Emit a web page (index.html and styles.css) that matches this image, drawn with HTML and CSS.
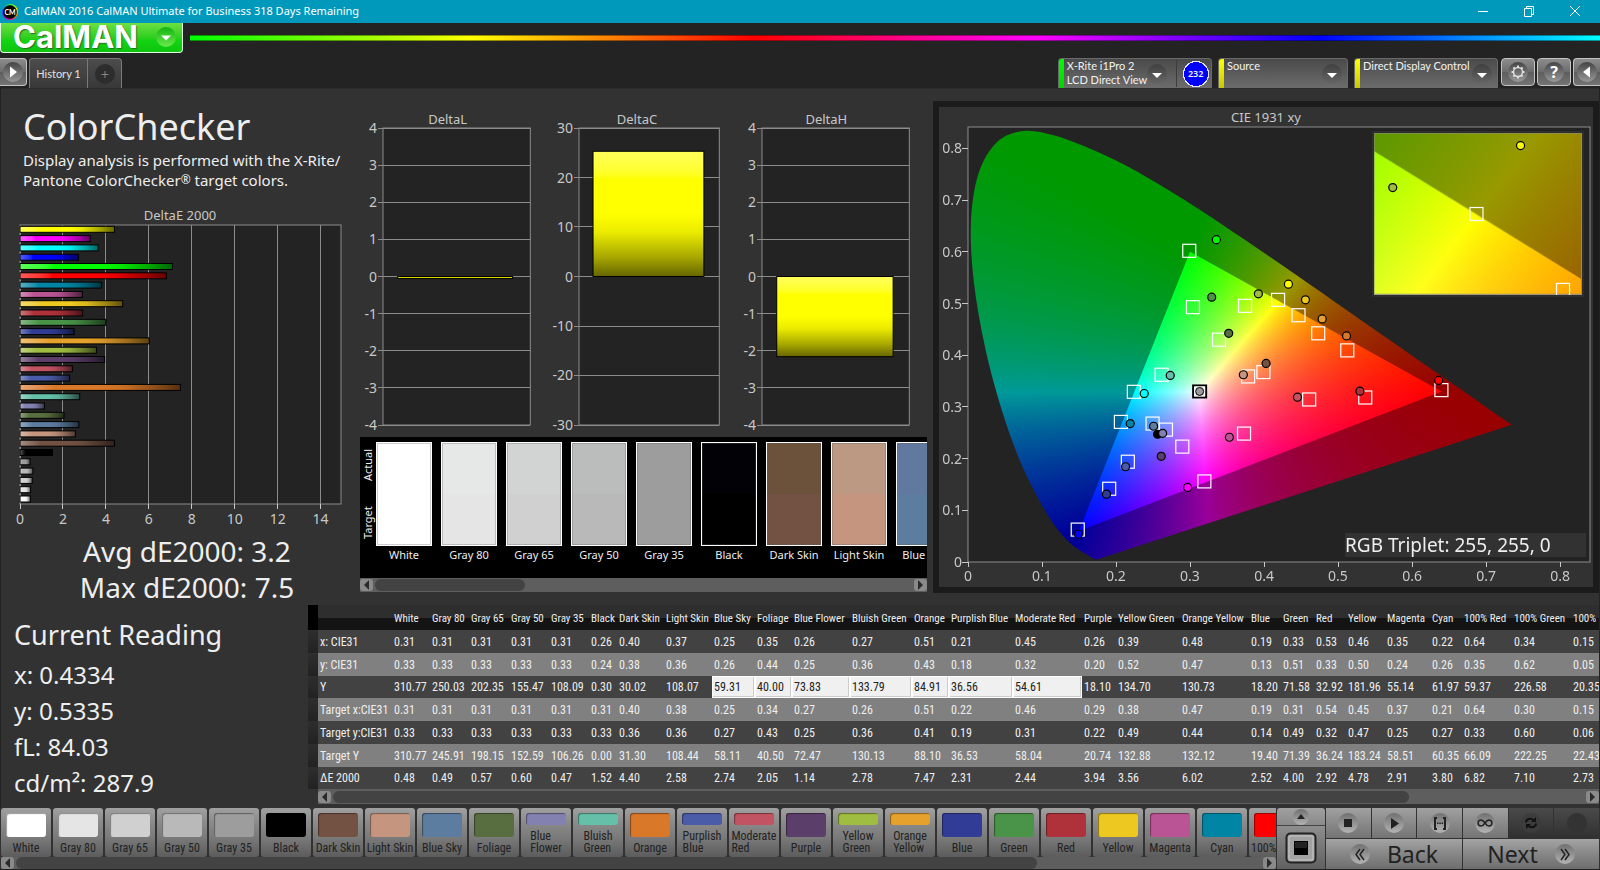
FILE: index.html
```html
<!DOCTYPE html>
<html lang="en">
<head>
<meta charset="utf-8">
<title>CalMAN 2016</title>
<link rel="stylesheet" href="styles.css">
</head>
<body>
<header class="titlebar">
  <span class="app-icon">CM</span>
  <h1 class="window-title">CalMAN 2016 CalMAN Ultimate for Business 318 Days Remaining</h1>
  <div class="window-controls">
    <button aria-label="Minimize"><svg width="12" height="12" viewBox="0 0 12 12"><path d="M1 6.500h10"/></svg></button>
    <button aria-label="Restore"><svg width="12" height="12" viewBox="0 0 12 12"><path d="M1.500 3.500h7v8h-7zM3.500 3.500v-2h7v8h-2"/></svg></button>
    <button aria-label="Close"><svg width="12" height="12" viewBox="0 0 12 12"><path d="M1 1l10 10M11 1L1 11"/></svg></button>
  </div>
</header>

<div class="brand">
  <button class="logo" aria-label="CalMAN menu"><span>CalMAN</span><svg width="20" height="20" viewBox="0 0 20 20"><circle cx="10" cy="10" r="10" fill="url(#logoDisc)"/><path d="M5 8.500h10l-5 5z" fill="#fff"/><defs><linearGradient id="logoDisc" x1="0" y1="0" x2="0" y2="1"><stop offset="0" stop-color="#12b312"/><stop offset="1" stop-color="#6bea4c"/></linearGradient></defs></svg></button>
  <div class="rainbow"></div>
</div>

<nav class="toolbar">
  <button class="square square-left" aria-label="Expand"><svg class="disc" viewBox="0 0 20 20"><path d="M7 4.500l7 5.500-7 5.500z"/></svg></button>
  <div class="tabs">
    <button class="tab">History 1</button>
    <button class="tab tab-add" aria-label="Add tab"><svg viewBox="0 0 20 20"><circle cx="10" cy="10" r="10"/><path d="M10 7v7M6.500 10.500h7"/></svg></button>
  </div>
  <div class="devices">
    <div class="device device-meter">
      <span class="stripe stripe-green"></span>
      <span class="device-name">X-Rite i1Pro 2<br>LCD Direct View</span>
      <button class="drop" aria-label="Meter options"><svg viewBox="0 0 20 20"><path d="M5 9h10l-5 5z"/></svg></button>
      <span class="count">232</span>
    </div>
    <div class="device device-source">
      <span class="stripe"></span>
      <span class="device-name">Source</span>
      <button class="drop" aria-label="Source options"><svg viewBox="0 0 20 20"><path d="M5 9h10l-5 5z"/></svg></button>
    </div>
    <div class="device device-display">
      <span class="stripe"></span>
      <span class="device-name">Direct Display Control</span>
      <button class="drop" aria-label="Display options"><svg viewBox="0 0 20 20"><path d="M5 9h10l-5 5z"/></svg></button>
    </div>
    <button class="square" aria-label="Settings"><svg class="disc" viewBox="0 0 20 20"><circle cx="10" cy="10" r="4.500" fill="none" stroke="#ddd" stroke-width="1.500"/><path d="M10 3.500v2M10 14.500v2M3.500 10h2M14.500 10h2M5.400 5.400l1.400 1.400M13.200 13.200l1.400 1.400M5.400 14.600l1.400-1.400M13.200 6.800l1.400-1.400" stroke="#ddd" stroke-width="2"/></svg></button>
    <button class="square square-help" aria-label="Help"><span class="disc">?</span></button>
    <button class="square square-right" aria-label="Collapse"><svg class="disc" viewBox="0 0 20 20"><path d="M13 4.500L6 10l7 5.500z"/></svg></button>
  </div>
</nav>

<main class="workspace">
  <section class="overview">
    <div class="summary">
      <h2 class="heading">ColorChecker</h2>
      <p class="lead">Display analysis is performed with the X-Rite/<br>Pantone ColorChecker<sup>®</sup> target colors.</p>
      <h3 class="chart-title">DeltaE 2000</h3>
      <div class="plot plot-error" id="error"></div>
      <p class="average">Avg dE2000: 3.2</p>
      <p class="average">Max dE2000: 7.5</p>
    </div>

    <div class="middle">
      <div class="deltas">
        <div class="delta"><h3 class="chart-title">DeltaL</h3><div class="plot" id="deltaL"></div></div>
        <div class="delta delta-wide"><h3 class="chart-title">DeltaC</h3><div class="plot" id="deltaC"></div></div>
        <div class="delta"><h3 class="chart-title">DeltaH</h3><div class="plot" id="deltaH"></div></div>
      </div>
      <div class="compare">
        <div class="compare-row">
          <div class="compare-side"><span>Actual</span><span>Target</span></div>
          <div class="patch"><div class="patch-color c-white"></div>White</div>
          <div class="patch"><div class="patch-color c-g80"></div>Gray 80</div>
          <div class="patch"><div class="patch-color c-g65"></div>Gray 65</div>
          <div class="patch"><div class="patch-color c-g50"></div>Gray 50</div>
          <div class="patch"><div class="patch-color c-g35"></div>Gray 35</div>
          <div class="patch"><div class="patch-color c-black"></div>Black</div>
          <div class="patch"><div class="patch-color c-dark"></div>Dark Skin</div>
          <div class="patch"><div class="patch-color c-light"></div>Light Skin</div>
          <div class="patch"><div class="patch-color c-sky"></div>Blue Sky</div>
        </div>
        <div class="scrollbar">
          <button aria-label="Scroll left"><svg viewBox="0 0 12 12"><path d="M9 1v10L4 6z"/></svg></button>
          <div class="track"><div class="thumb" style="width:28%"></div></div>
          <button aria-label="Scroll right"><svg viewBox="0 0 12 12"><path d="M4 1v10l5-5z"/></svg></button>
        </div>
      </div>
    </div>

    <div class="cie">
      <h3 class="chart-title">CIE 1931 xy</h3>
      <div class="plot plot-cie" id="cie">
        <div class="inset" id="inset"></div>
        <p class="triplet">RGB Triplet: 255, 255, 0</p>
      </div>
    </div>
  </section>

  <section class="details">
    <div class="reading">
      <h2 class="reading-title">Current Reading</h2>
      <p>x: 0.4334</p>
      <p>y: 0.5335</p>
      <p>fL: 84.03</p>
      <p>cd/m²: 287.9</p>
    </div>
    <div class="results">
      <div class="results-view">
      <table>
        <colgroup><col style="width:10px"><col style="width:74px"><col style="width:38px"><col style="width:39px"><col style="width:40px"><col style="width:40px"><col style="width:40px"><col style="width:28px"><col style="width:47px"><col style="width:48px"><col style="width:43px"><col style="width:37px"><col style="width:58px"><col style="width:62px"><col style="width:37px"><col style="width:64px"><col style="width:69px"><col style="width:34px"><col style="width:64px"><col style="width:69px"><col style="width:32px"><col style="width:33px"><col style="width:32px"><col style="width:39px"><col style="width:45px"><col style="width:32px"><col style="width:50px"><col style="width:59px"><col style="width:60px"></colgroup>
        <thead><tr><th class="gutter"></th><th></th><th>White</th><th>Gray 80</th><th>Gray 65</th><th>Gray 50</th><th>Gray 35</th><th>Black</th><th>Dark Skin</th><th>Light Skin</th><th>Blue Sky</th><th>Foliage</th><th>Blue Flower</th><th>Bluish Green</th><th>Orange</th><th>Purplish Blue</th><th>Moderate Red</th><th>Purple</th><th>Yellow Green</th><th>Orange Yellow</th><th>Blue</th><th>Green</th><th>Red</th><th>Yellow</th><th>Magenta</th><th>Cyan</th><th>100% Red</th><th>100% Green</th><th>100% Blue</th></tr></thead>
        <tbody>
        <tr><td class="gutter"></td><th>x: CIE31</th><td>0.31</td><td>0.31</td><td>0.31</td><td>0.31</td><td>0.31</td><td>0.26</td><td>0.40</td><td>0.37</td><td>0.25</td><td>0.35</td><td>0.26</td><td>0.27</td><td>0.51</td><td>0.21</td><td>0.45</td><td>0.26</td><td>0.39</td><td>0.48</td><td>0.19</td><td>0.33</td><td>0.53</td><td>0.46</td><td>0.35</td><td>0.22</td><td>0.64</td><td>0.34</td><td>0.15</td></tr>
        <tr><td class="gutter"></td><th>y: CIE31</th><td>0.33</td><td>0.33</td><td>0.33</td><td>0.33</td><td>0.33</td><td>0.24</td><td>0.38</td><td>0.36</td><td>0.26</td><td>0.44</td><td>0.25</td><td>0.36</td><td>0.43</td><td>0.18</td><td>0.32</td><td>0.20</td><td>0.52</td><td>0.47</td><td>0.13</td><td>0.51</td><td>0.33</td><td>0.50</td><td>0.24</td><td>0.26</td><td>0.35</td><td>0.62</td><td>0.05</td></tr>
        <tr class="row-short"><td class="gutter"></td><th>Y</th><td>310.77</td><td>250.03</td><td>202.35</td><td>155.47</td><td>108.09</td><td>0.30</td><td>30.02</td><td>108.07</td><td class="picked">59.31</td><td class="picked">40.00</td><td class="picked">73.83</td><td class="picked">133.79</td><td class="picked">84.91</td><td class="picked">36.56</td><td class="picked">54.61</td><td>18.10</td><td>134.70</td><td>130.73</td><td>18.20</td><td>71.58</td><td>32.92</td><td>181.96</td><td>55.14</td><td>61.97</td><td>59.37</td><td>226.58</td><td>20.35</td></tr>
        <tr><td class="gutter"></td><th>Target x:CIE31</th><td>0.31</td><td>0.31</td><td>0.31</td><td>0.31</td><td>0.31</td><td>0.31</td><td>0.40</td><td>0.38</td><td>0.25</td><td>0.34</td><td>0.27</td><td>0.26</td><td>0.51</td><td>0.22</td><td>0.46</td><td>0.29</td><td>0.38</td><td>0.47</td><td>0.19</td><td>0.31</td><td>0.54</td><td>0.45</td><td>0.37</td><td>0.21</td><td>0.64</td><td>0.30</td><td>0.15</td></tr>
        <tr><td class="gutter"></td><th>Target y:CIE31</th><td>0.33</td><td>0.33</td><td>0.33</td><td>0.33</td><td>0.33</td><td>0.33</td><td>0.36</td><td>0.36</td><td>0.27</td><td>0.43</td><td>0.25</td><td>0.36</td><td>0.41</td><td>0.19</td><td>0.31</td><td>0.22</td><td>0.49</td><td>0.44</td><td>0.14</td><td>0.49</td><td>0.32</td><td>0.47</td><td>0.25</td><td>0.27</td><td>0.33</td><td>0.60</td><td>0.06</td></tr>
        <tr><td class="gutter"></td><th>Target Y</th><td>310.77</td><td>245.91</td><td>198.15</td><td>152.59</td><td>106.26</td><td>0.00</td><td>31.30</td><td>108.44</td><td>58.11</td><td>40.50</td><td>72.47</td><td>130.13</td><td>88.10</td><td>36.53</td><td>58.04</td><td>20.74</td><td>132.88</td><td>132.12</td><td>19.40</td><td>71.39</td><td>36.24</td><td>183.24</td><td>58.51</td><td>60.35</td><td>66.09</td><td>222.25</td><td>22.43</td></tr>
        <tr class="row-short"><td class="gutter"></td><th>ΔE 2000</th><td>0.48</td><td>0.49</td><td>0.57</td><td>0.60</td><td>0.47</td><td>1.52</td><td>4.40</td><td>2.58</td><td>2.74</td><td>2.05</td><td>1.14</td><td>2.78</td><td>7.47</td><td>2.31</td><td>2.44</td><td>3.94</td><td>3.56</td><td>6.02</td><td>2.52</td><td>4.00</td><td>2.92</td><td>4.78</td><td>2.91</td><td>3.80</td><td>6.82</td><td>7.10</td><td>2.73</td></tr>
        </tbody>
      </table>
      </div>
      <div class="scrollbar results-scroll">
        <button aria-label="Scroll left"><svg viewBox="0 0 12 12"><path d="M9 1v10L4 6z"/></svg></button>
        <div class="track"><div class="thumb" style="width:86%"></div></div>
        <button aria-label="Scroll right"><svg viewBox="0 0 12 12"><path d="M4 1v10l5-5z"/></svg></button>
      </div>
    </div>
  </section>
</main>

<footer class="dock">
  <div class="swatches">
    <div class="swatch-row">
      <button class="swatch"><i class="c-white"></i><span>White</span></button>
      <button class="swatch"><i class="c-g80"></i><span>Gray 80</span></button>
      <button class="swatch"><i class="c-g65"></i><span>Gray 65</span></button>
      <button class="swatch"><i class="c-g50"></i><span>Gray 50</span></button>
      <button class="swatch"><i class="c-g35"></i><span>Gray 35</span></button>
      <button class="swatch"><i class="c-black"></i><span>Black</span></button>
      <button class="swatch"><i class="c-dark"></i><span>Dark Skin</span></button>
      <button class="swatch"><i class="c-light"></i><span>Light Skin</span></button>
      <button class="swatch"><i class="c-sky"></i><span>Blue Sky</span></button>
      <button class="swatch"><i class="c-foliage"></i><span>Foliage</span></button>
      <button class="swatch"><i class="c-flower"></i><span>Blue<br>Flower</span></button>
      <button class="swatch"><i class="c-bluish"></i><span>Bluish<br>Green</span></button>
      <button class="swatch"><i class="c-orange"></i><span>Orange</span></button>
      <button class="swatch"><i class="c-purplish"></i><span>Purplish<br>Blue</span></button>
      <button class="swatch"><i class="c-moderate"></i><span>Moderate<br>Red</span></button>
      <button class="swatch"><i class="c-purple"></i><span>Purple</span></button>
      <button class="swatch"><i class="c-ygreen"></i><span>Yellow<br>Green</span></button>
      <button class="swatch"><i class="c-oyellow"></i><span>Orange<br>Yellow</span></button>
      <button class="swatch"><i class="c-blue"></i><span>Blue</span></button>
      <button class="swatch"><i class="c-green"></i><span>Green</span></button>
      <button class="swatch"><i class="c-red"></i><span>Red</span></button>
      <button class="swatch"><i class="c-yellow"></i><span>Yellow</span></button>
      <button class="swatch"><i class="c-magenta"></i><span>Magenta</span></button>
      <button class="swatch"><i class="c-cyan"></i><span>Cyan</span></button>
      <button class="swatch"><i class="c-fullred"></i><span>100% Red</span></button>
    </div>
    <div class="scrollbar">
      <button aria-label="Scroll left"><svg viewBox="0 0 12 12"><path d="M9 1v10L4 6z"/></svg></button>
      <div class="track"><div class="thumb" style="width:82%"></div></div>
      <button aria-label="Scroll right"><svg viewBox="0 0 12 12"><path d="M4 1v10l5-5z"/></svg></button>
    </div>
  </div>
  <div class="window-pick">
    <button class="pick-up" aria-label="More patterns"><svg width="16" height="16" viewBox="0 0 16 16"><circle cx="8" cy="8" r="8" fill="url(#knob)"/><path d="M4 10h8L8 5z" fill="#222"/></svg></button>
    <button class="pick-main" aria-label="Window pattern"><svg width="32" height="32" viewBox="0 0 32 32"><rect x="1.500" y="1.500" width="29" height="29" rx="4" fill="#a2a2a2" stroke="#222" stroke-width="2"/><rect x="4" y="4" width="24" height="24" rx="2" fill="none" stroke="#c6c6c6"/><rect x="9" y="9" width="14" height="14" fill="#000"/><rect x="10" y="10" width="12" height="6" fill="#222"/></svg></button>
  </div>
  <div class="transport">
    <div class="keys">
      <button aria-label="Stop"><svg width="20" height="20" viewBox="0 0 20 20"><defs><linearGradient id="knob" x1="0" y1="0" x2="0" y2="1"><stop offset="0" stop-color="#707070"/><stop offset="1" stop-color="#b4b4b4"/></linearGradient></defs><circle cx="10" cy="10" r="10" fill="url(#knob)"/><path d="M6 6h8v8H6z"/></svg></button>
      <button aria-label="Play"><svg width="20" height="20" viewBox="0 0 20 20"><circle cx="10" cy="10" r="10" fill="url(#knob)"/><path d="M7 5l8 5.500L7 16z"/></svg></button>
      <button aria-label="Range"><svg width="20" height="20" viewBox="0 0 20 20"><circle cx="10" cy="10" r="10" fill="url(#knob)"/><path d="M7 5H5v11h2M13 5h2v11h-2" fill="none" stroke="#222" stroke-width="2"/><path d="M7 9.500h1.500V11H7zM9.300 9.500h1.500V11H9.300zM11.600 9.500h1.500V11h-1.500z"/></svg></button>
      <button aria-label="Loop"><svg width="20" height="20" viewBox="0 0 20 20"><circle cx="10" cy="10" r="10" fill="url(#knob)"/><path d="M10 10c-1.500-2.200-2.500-3-3.900-3a3 3 0 0 0 0 6c1.400 0 2.400-.8 3.900-3s2.500-3 3.900-3a3 3 0 0 1 0 6c-1.400 0-2.400-.8-3.900-3z" fill="none" stroke="#222" stroke-width="1.500"/></svg></button>
      <button class="dim" aria-label="Repeat"><svg width="20" height="20" viewBox="0 0 20 20"><circle cx="10" cy="10" r="10" fill="#3c3c3c"/><path d="M5 9.500C5 6 9.500 4.500 12.500 7M15 10.500c0 3.500-4.500 5-7.500 2.500" fill="none" stroke="#111" stroke-width="2"/><path d="M15 4v5h-5zM5 16v-5h5z" fill="#111"/></svg></button>
      <button class="dim" aria-label="Unused"><svg width="20" height="20" viewBox="0 0 20 20"><circle cx="10" cy="10" r="10" fill="#333"/></svg></button>
    </div>
    <div class="steps">
      <button><svg width="20" height="20" viewBox="0 0 20 20"><circle cx="10" cy="10" r="10" fill="url(#knob)"/><path d="M10 5l-4 5.500 4 5.500M14 5l-4 5.500 4 5.500" fill="none" stroke="#222" stroke-width="1.500"/></svg>Back</button>
      <button>Next<svg width="20" height="20" viewBox="0 0 20 20"><circle cx="10" cy="10" r="10" fill="url(#knob)"/><path d="M6 5l4 5.500L6 16M10 5l4 5.500-4 5.500" fill="none" stroke="#222" stroke-width="1.500"/></svg></button>
    </div>
  </div>
</footer>
<script src="charts.js"></script>
</body>
</html>
```

FILE: styles.css
```css
* { box-sizing: border-box; }

body {
  margin: 0;
  min-height: 100vh;
  display: flex;
  flex-direction: column;
  background: #232323;
  color: #eee;
  font: 13px/16px "Noto Sans", sans-serif;
  overflow: hidden;
}

h1, h2, h3, p { margin: 0; font-weight: 400; }

button {
  margin: 0;
  padding: 0;
  border: 0;
  background: none;
  color: inherit;
  font: inherit;
}

svg { display: block; }

/* Title bar */
.titlebar {
  display: flex;
  align-items: center;
  height: 23px;
  padding-left: 2px;
  background: #0099bc;
}
.app-icon {
  width: 16px;
  height: 16px;
  border-radius: 50%;
  background: radial-gradient(circle, #000 55%, transparent 65%), conic-gradient(#3f3, #ff0, #f80, #f0a, #80f, #08f, #3f3);
  color: #fff;
  font: 700 7px/16px "Lato", sans-serif;
  text-align: center;
}
.window-title {
  flex: 1;
  padding: 0 0 1px 6px;
  color: #fff;
  font-size: 11px;
}
.window-controls { display: flex; padding-right: 2px; }
.window-controls button {
  display: grid;
  place-items: center;
  width: 46px;
  height: 20px;
  margin-bottom: 2px;
}
.window-controls path { fill: none; stroke: #fff; }

/* Brand row */
.brand {
  display: flex;
  gap: 7px;
  height: 35px;
}
.logo {
  display: flex;
  align-items: center;
  justify-content: space-between;
  width: 183px;
  height: 30px;
  padding: 0 6px 2px 12px;
  border: solid #e4f7e4;
  border-width: 0 1px 1px;
  border-radius: 0 0 4px 4px;
  background: linear-gradient(#6ee043, #2fce20 50%, #12d412 60%, #0fc40f);
  color: #fff;
  font: 700 31px/28px "Inter", sans-serif;
  text-shadow: 1px 1px 1px #2a6a2a;
}
.rainbow {
  flex: 1;
  height: 6px;
  margin-top: 12px;
  border: solid rgba(0, 0, 0, .4);
  border-width: 1px 0;
  background: linear-gradient(90deg, #0f0, #ff0, #f00, #f0f, #00f, #0ff);
}

/* Toolbar */
.toolbar {
  display: flex;
  gap: 2px;
  height: 30px;
  font: 11px/14px "Lato", sans-serif;
}
.square {
  display: grid;
  place-items: center;
  width: 34px;
  height: 28px;
  border: 1px solid #c4c4c4;
  border-radius: 4px;
  background: linear-gradient(#8c8c8c, #6c6c6c 50%, #5e5e5e 51%, #747474);
}
.square-left { width: 27px; border-left: 0; border-radius: 0 4px 4px 0; }
.square-right { width: 27px; border-right: 0; border-radius: 4px 0 0 4px; }
.disc {
  width: 20px;
  height: 20px;
  border-radius: 50%;
  background: linear-gradient(#444, #999);
  fill: #fff;
}
.square-help { color: #fff; font: 700 16px/20px "Noto Sans", sans-serif; }
.tabs { display: flex; height: 30px; }
.tab {
  width: 59px;
  border: solid #7a7a7a;
  border-width: 1px 1px 0;
  border-radius: 3px 0 0 0;
  background: linear-gradient(#4c4c4c, #383838);
  color: #e2e2e2;
}
.tab-add {
  display: grid;
  place-items: center;
  width: 34px;
  border-left: 0;
  border-radius: 0 4px 0 0;
}
.tab-add svg { width: 20px; height: 20px; fill: #2d2d2d; stroke: #888; }
.tab-add circle { stroke: none; }
.devices {
  display: flex;
  gap: 2px;
  margin-left: auto;
}
.device {
  display: flex;
  height: 30px;
  margin-right: 4px;
  border: 1px solid #6a6a6a;
  border-bottom: 0;
  border-radius: 4px 4px 0 0;
  background: linear-gradient(#4a4a4a, #6c6c6c);
  color: #f2f2f2;
  overflow: hidden;
}
.device-meter { width: 154px; }
.device-source { width: 130px; }
.device-display { width: 144px; margin-right: 1px; }
.stripe { width: 5px; background: linear-gradient(#ffff00, #c8c800); }
.stripe-green { background: linear-gradient(#00ff00, #00d400); }
.device-name { flex: 1; padding-left: 3px; white-space: nowrap; }
.drop {
  flex: none;
  align-self: center;
  width: 20px;
  height: 20px;
  margin-right: 5px;
  border-radius: 50%;
  background: linear-gradient(#404040, #666);
}
.drop svg { fill: #fff; }
.device-meter .drop { margin-right: 9px; }
.device-display .drop { margin-right: 5px; }
.count {
  width: 36px;
  margin: 1px 0;
  border-left: 1px solid #3c3c3c;
  background: radial-gradient(circle at 19px 14px, #00f 12px, #e4e4ff 12px, #e4e4ff 13px, transparent 13px);
  padding-left: 3px;
  font: 600 9px/28px "Noto Sans", sans-serif;
  text-align: center;
}

/* Workspace */
.workspace {
  flex: 1;
  display: flex;
  flex-direction: column;
  margin: 0 1px;
  background: #323232;
  border-top: 1px solid #2a2a2a;
}
.overview {
  flex: 1;
  display: grid;
  grid-template-columns: minmax(0, 352fr) minmax(0, 580fr) minmax(0, 666fr);
  min-height: 516px;
}
.chart-title {
  color: #c8c8c8;
  font-size: 13px;
  line-height: 18px;
  text-align: center;
}
.plot { position: relative; flex: 1; }
.plot canvas, .plot svg {
  position: absolute;
  inset: 0;
  width: 100%;
  height: 100%;
}
.plot svg { overflow: visible; }
.plot text { fill: #c8c8c8; font-size: 14px; }
.plot .frame { fill: #232323; stroke: #8c8c8c; }
.plot .outline { fill: none; stroke: #8c8c8c; }
.plot .grid { stroke: #8c8c8c; shape-rendering: crispEdges; }
.plot .tick { stroke: #c8c8c8; shape-rendering: crispEdges; }

.summary { display: flex; flex-direction: column; }
.heading {
  padding: 15px 22px 0;
  font-size: 36px;
  line-height: 46px;
}
.lead {
  padding-left: 22px;
  font-size: 15px;
  line-height: 20px;
  white-space: nowrap;
}
.lead sup { font-size: 12px; line-height: 1; vertical-align: 2px; }
.summary .chart-title { margin-top: 16px; padding-left: 6px; }
.plot-error { margin: 1px 12px 29px 19px; }
.average {
  padding-left: 20px;
  font-size: 28px;
  line-height: 36px;
  text-align: center;
}

.middle {
  display: flex;
  flex-direction: column;
  padding-bottom: 13px;
}
.deltas {
  flex: 1;
  display: grid;
  grid-template-columns: 1fr 1fr 1fr;
  padding: 21px 12px 12px 0;
}
.delta { display: flex; flex-direction: column; }
.delta .plot { margin-left: 30px; margin-right: 12px; }
.delta-wide .plot { margin-left: 37px; }

.compare { margin: 0 6px 0 7px; background: #000; overflow: hidden; }
.compare-row {
  display: flex;
  gap: 9px;
  height: 141px;
  padding-top: 5px;
  overflow: hidden;
  font-size: 11px;
}
.compare-side {
  display: flex;
  flex-direction: row-reverse;
  justify-content: space-between;
  flex: none;
  width: 104px;
  height: 16px;
  margin-right: -97px;
  padding: 0 7px;
  transform: rotate(-90deg) translateX(-104px);
  transform-origin: 0 0;
}
.patch {
  flex: none;
  width: 56px;
  text-align: center;
  white-space: nowrap;
}
.patch-color {
  height: 104px;
  margin-bottom: 1px;
  border: 1px solid #fff;
  outline: 1px solid rgba(90, 90, 90, .3);
  outline-offset: -2px;
}

/* Scroll bars */
.scrollbar {
  display: flex;
  align-items: center;
  gap: 2px;
  height: 14px;
  background: #5e5e5e;
}
.scrollbar button {
  width: 13px;
  height: 12px;
  border-radius: 3px;
  background: #8a8a8a;
}
.scrollbar svg { width: 12px; height: 12px; fill: #2a2a2a; }
.track { flex: 1; height: 12px; }
.thumb { height: 12px; border-radius: 6px; background: #434343; }

/* CIE chart */
.cie {
  display: flex;
  flex-direction: column;
  margin: 12px 0;
  padding-top: 1px;
  border: 6px solid #1b1b1b;
  background: #323232;
}
.plot-cie { margin: 1px 3px 25px 29px; }
.inset {
  position: absolute;
  right: 1%;
  top: 1%;
  width: 34%;
  height: 38%;
  border: 2px solid #2e2e2e;
}
.inset svg { overflow: hidden; }
.triplet {
  position: absolute;
  right: 4px;
  bottom: 5px;
  width: 241px;
  background: #323232;
  font-size: 19px;
  line-height: 24px;
}

/* Reading and results */
.details {
  display: grid;
  grid-template-columns: 307px minmax(0, 1fr);
  padding-bottom: 4px;
}
.reading {
  padding-left: 13px;
  font-size: 24px;
  line-height: 36px;
}
.reading-title { padding: 11px 0 3px; font-size: 27px; line-height: 38px; }
.results-view { overflow: hidden; }
table {
  width: 1294px;
  border-collapse: collapse;
  table-layout: fixed;
  font: 12px/16px "Roboto Condensed", "Liberation Sans Narrow", "Lato", sans-serif;
}
th, td {
  height: 23px;
  padding: 0 0 0 2px;
  font-weight: 400;
  text-align: left;
  white-space: nowrap;
}
.row-short > * { height: 22px; }
thead th { height: 25px; padding-top: 3px; background: linear-gradient(#2e2e2e 50%, #141414 51%); font-size: 11px; }
thead .gutter { background: #000; }
tbody tr { background: #424242; }
tbody tr:nth-child(even) { background: #808080; }
tbody .gutter { background: linear-gradient(#2e2e2e, #222); }
.picked {
  background: #f0f0f0;
  box-shadow: inset 0 0 0 1px #fff, inset -1px -1px 0 1px #ccc;
  color: #222;
}
.results-scroll { height: 15px; margin-left: 10px; }

/* Dock */
.dock {
  display: flex;
  gap: 1px;
  height: 62px;
  padding-left: 1px;
  border-bottom: 1px solid #222;
  background: #323232;
  color: #222;
}
.swatches {
  flex: 1;
  min-width: 0;
  display: flex;
  flex-direction: column;
}
.swatch-row {
  flex: 1;
  display: flex;
  gap: 2px;
  overflow: hidden;
}
.swatch {
  flex: none;
  display: flex;
  flex-direction: column;
  align-items: center;
  justify-content: space-between;
  width: 50px;
  height: 49px;
  padding: 5px 0 3px;
  border-radius: 3px;
  background: linear-gradient(#a0a0a0, #8a8a8a 30%, #7a7a7a 60%, #5c5c5c);
  font: 12px/12px "Roboto Condensed", "Liberation Sans Narrow", "Lato", sans-serif;
  text-align: left;
  white-space: nowrap;
}
.swatch i {
  flex: 1;
  width: 40px;
  margin-bottom: 5px;
  border-radius: 3px;
  box-shadow: inset 1px 1px 1px rgba(0, 0, 0, .4);
}
.swatches .scrollbar { height: 12px; }
.window-pick { display: flex; flex-direction: column; width: 48px; }
.pick-up, .pick-main {
  display: grid;
  place-items: center;
  background: linear-gradient(#a0a0a0, #8a8a8a);
}
.pick-up { height: 18px; border-bottom: 1px solid #444; border-radius: 3px 3px 0 0; }
.pick-main { flex: 1; background: linear-gradient(#8e8e8e, #606060); }
.transport {
  display: flex;
  flex-direction: column;
  gap: 1px;
  width: 273px;
  margin-right: 1px;
}
.keys, .steps {
  flex: 1;
  display: grid;
  grid-template-columns: repeat(6, 1fr);
  gap: 1px;
}
.steps { grid-template-columns: 1fr 1fr; }
.keys button, .steps button {
  display: flex;
  align-items: center;
  justify-content: center;
  background: linear-gradient(#a4a4a4, #868686 50%, #6e6e6e);
}
.keys button { background: linear-gradient(#a0a0a0, #747474); fill: #222; }
.keys .dim { background: linear-gradient(#4a4a4a, #303030); }
.steps button {
  gap: 17px;
  font-size: 23px;
  line-height: 28px;
}

/* Patch colours */
.c-white { background: #fff; }
.c-g80 { background: #e5e5e5; }
.c-g65 { background: #d0d0d0; }
.c-g50 { background: #b9b9b9; }
.c-g35 { background: #9d9d9d; }
.c-black { background: #000; }
.c-dark { background: #735244; }
.c-light { background: #c5957f; }
.c-sky { background: #5c7ca0; }
.c-foliage { background: #596e40; }
.c-flower { background: #8281b0; }
.c-bluish { background: #65bfa9; }
.c-orange { background: #d97828; }
.c-purplish { background: #4a5ba7; }
.c-moderate { background: #c25362; }
.c-purple { background: #5b3e6a; }
.c-ygreen { background: #9fbd40; }
.c-oyellow { background: #e6a12c; }
.c-blue { background: #313c96; }
.c-green { background: #499449; }
.c-red { background: #af323a; }
.c-yellow { background: #ecc821; }
.c-magenta { background: #bb5494; }
.c-cyan { background: #0086a4; }
.c-fullred { background: #f00; }
.patch-color.c-g80 { background: linear-gradient(#e5e8e7 50%, #e5e5e5 50%); }
.patch-color.c-g65 { background: linear-gradient(#d1d4d3 50%, #d0d0d0 50%); }
.patch-color.c-g50 { background: linear-gradient(#babdbc 50%, #b9b9b9 50%); }
.patch-color.c-black { background: linear-gradient(#020206 50%, #000 50%); }
.patch-color.c-dark { background: linear-gradient(#6c523a 50%, #735244 50%); }
.patch-color.c-light { background: linear-gradient(#bc9983 50%, #c5957f 50%); }
.patch-color.c-sky { background: linear-gradient(#61799f 50%, #5c7ca0 50%); }
```

FILE: charts.js
```js
const NS = 'http://www.w3.org/2000/svg';

function add(parent, name, attrs, text) {
  const el = document.createElementNS(NS, name);
  for (const key in attrs) el.setAttribute(key, attrs[key]);
  if (text !== undefined) el.textContent = text;
  parent.appendChild(el);
  return el;
}

const pct = v => (v * 100).toFixed(3) + '%';

function gradient(svg, id, color, vertical) {
  const g = add(svg, 'linearGradient', vertical ? { id, x1: 0, y1: 0, x2: 0, y2: 1 } : { id });
  const mix = (c, k) => `color-mix(in srgb, ${color}, ${c} ${k}%)`;
  [[0, mix('white', 35)], [0.22, color], [0.5, color], [0.65, mix('black', 8)], [0.85, mix('black', 35)], [1, mix('black', 60)]]
    .forEach(([offset, c]) => add(g, 'stop', { offset, style: 'stop-color:' + c }));
  return `url(#${id})`;
}

/* Tick below the horizontal axis */
function tick(svg, x) {
  add(add(svg, 'svg', { x, y: '100%', style: 'inset:auto' }), 'line', { class: 'tick', x1: 0, x2: 0, y1: 0, y2: 5 });
}

/* Horizontal error bars */
(function () {
  const svg = add(document.getElementById('error'), 'svg', {});
  add(svg, 'rect', { class: 'frame', width: '100%', height: '100%' });
  for (let v = 0; v <= 14; v += 2) {
    const x = pct(v / 14.95);
    add(svg, 'line', { class: 'grid', x1: x, x2: x, y1: 0, y2: '100%' });
    tick(svg, x);
    add(svg, 'text', { x, y: '100%', dy: 20, 'text-anchor': 'middle' }, v);
  }
  const bars = [['#ffff00', 4.4], ['#ff00ff', 3.27], ['#00ffff', 3.64], ['#0000ff', 2.73], ['#00ff00', 7.1], ['#ff0000', 6.82],
    ['#0086a4', 3.8], ['#bb5494', 2.91], ['#ecc821', 4.78], ['#af323a', 2.92], ['#499449', 4], ['#313c96', 2.52],
    ['#e6a12c', 6.02], ['#9fbd40', 3.56], ['#5b3e6a', 3.94], ['#c25362', 2.44], ['#4a5ba7', 2.31], ['#d97828', 7.47],
    ['#65bfa9', 2.78], ['#8281b0', 1.14], ['#596e40', 2.05], ['#5c7ca0', 2.74], ['#c5957f', 2.58], ['#735244', 4.4],
    ['#000000', 1.52], ['#9d9d9d', 0.47], ['#b9b9b9', 0.6], ['#d0d0d0', 0.57], ['#e5e5e5', 0.49], ['#ffffff', 0.48]];
  bars.forEach(([color, value], i) => {
    add(svg, 'rect', { x: 0, y: pct((i + 0.14) / 30), width: pct(value / 14.95), height: 6, fill: gradient(svg, 'bar' + i, color), stroke: '#000' });
  });
})();

/* Single-bar delta charts */
[['deltaL', 4, 1, -0.05, 0.1, 0.88], ['deltaC', 30, 10, 25.3, 0.1, 0.89], ['deltaH', 4, 1, -2.16, 0.1, 0.89]].forEach(([id, max, step, value, left, right]) => {
  const svg = add(document.getElementById(id), 'svg', {});
  add(svg, 'rect', { class: 'frame', width: '100%', height: '100%' });
  const at = v => (max - v) / (2 * max);
  for (let v = -max; v <= max; v += step) {
    const y = pct(at(v));
    add(svg, 'line', { class: 'grid', x1: -5, x2: '100%', y1: y, y2: y });
    add(svg, 'text', { x: -6, y, dy: 5, 'text-anchor': 'end' }, v);
  }
  const top = at(Math.max(0, value));
  add(svg, 'rect', { x: pct(left), y: pct(top), width: pct(right - left), height: pct(Math.max(0.006, Math.abs(value) / (2 * max))), fill: gradient(svg, id + 'Fill', '#ffff00', true), stroke: '#000' });
});

/* Chromaticity diagram */
const LOCUS = [[.1741, .005], [.1714, .0051], [.1644, .0109], [.1566, .0177], [.144, .0297], [.1355, .0399], [.1241, .0578],
  [.1096, .0868], [.0913, .1327], [.0687, .2007], [.0454, .295], [.0235, .4127], [.0082, .5384], [.0039, .6548], [.0139, .7502],
  [.0389, .812], [.0743, .8338], [.1142, .8262], [.1547, .8059], [.1929, .7816], [.2296, .7543], [.3016, .6923], [.3731, .6245],
  [.4441, .5547], [.5125, .4866], [.5752, .4242], [.627, .3725], [.6658, .334], [.6915, .3083], [.719, .2809], [.7347, .2653]];
const GAMUT = [[.64, .33], [.3, .6], [.15, .06]];

function shade(w, h, range, level) {
  const c = document.createElement('canvas');
  c.width = w;
  c.height = h;
  const ctx = c.getContext('2d');
  const img = ctx.createImageData(w, h);
  for (let j = 0; j < h; j++) {
    for (let i = 0; i < w; i++) {
      const x = range.x0 + (i + 0.5) / w * (range.x1 - range.x0);
      const y = Math.max(1e-4, range.y1 - (j + 0.5) / h * (range.y1 - range.y0));
      const X = x / y, Z = (1 - x - y) / y;
      const r = Math.max(0, 3.2406 * X - 1.5372 - 0.4986 * Z);
      const g = Math.max(0, -0.9689 * X + 1.8758 + 0.0415 * Z);
      const b = Math.max(0, 0.0557 * X - 0.204 + 1.057 * Z);
      const k = 255 * level / Math.max(r, g, b, 1e-6);
      img.data.set([r * k, g * k, b * k, 255], (j * w + i) * 4);
    }
  }
  ctx.putImageData(img, 0, 0);
  return c;
}

function chromaticity(host, range) {
  const w = host.clientWidth, h = host.clientHeight;
  const canvas = document.createElement('canvas');
  canvas.width = w;
  canvas.height = h;
  host.prepend(canvas);
  const ctx = canvas.getContext('2d');
  const px = ([x, y]) => [(x - range.x0) / (range.x1 - range.x0) * w, (range.y1 - y) / (range.y1 - range.y0) * h];
  ctx.fillStyle = '#232323';
  ctx.fillRect(0, 0, w, h);
  ctx.save();
  ctx.beginPath();
  const pts = LOCUS.map(px);
  ctx.moveTo(...pts[0]);
  for (let i = 0; i < pts.length - 1; i++) {
    const p0 = pts[Math.max(0, i - 1)], p1 = pts[i], p2 = pts[i + 1], p3 = pts[Math.min(pts.length - 1, i + 2)];
    ctx.bezierCurveTo(p1[0] + (p2[0] - p0[0]) / 6, p1[1] + (p2[1] - p0[1]) / 6,
      p2[0] - (p3[0] - p1[0]) / 6, p2[1] - (p3[1] - p1[1]) / 6, p2[0], p2[1]);
  }
  ctx.closePath();
  ctx.clip();
  ctx.drawImage(shade(w, h, range, 0.6), 0, 0);
  ctx.beginPath();
  GAMUT.map(px).forEach(p => ctx.lineTo(...p));
  ctx.closePath();
  ctx.clip();
  ctx.drawImage(shade(w, h, range, 1), 0, 0);
  ctx.restore();
  const svg = document.createElementNS(NS, 'svg');
  canvas.after(svg);
  add(svg, 'rect', { class: 'outline', width: '100%', height: '100%' });
  return svg;
}

function markers(svg, range, targets, readings) {
  const fx = x => pct((x - range.x0) / (range.x1 - range.x0));
  const fy = y => pct((range.y1 - y) / (range.y1 - range.y0));
  targets.forEach(([x, y]) => add(svg, 'rect', { x: fx(x), y: fy(y), width: 13, height: 13, transform: 'translate(-6.5 -6.5)', fill: 'none', stroke: '#fff', 'stroke-width': 1.2 }));
  readings.forEach(([x, y, fill]) => add(svg, 'circle', { cx: fx(x), cy: fy(y), r: 4, fill, stroke: '#000', 'stroke-width': 1.2 }));
}

const full = { x0: 0, x1: .8405, y0: 0, y1: .8415 };
const cie = chromaticity(document.getElementById('cie'), full);
for (let i = 0; i <= 8; i++) {
  const x = pct(i / 10 / full.x1), y = pct(1 - i / 10 / full.y1);
  add(cie, 'text', { x, y: '100%', dy: 19, 'text-anchor': 'middle' }, i ? i / 10 : 0);
  add(cie, 'text', { x: -6, y, dy: 5, 'text-anchor': 'end' }, i ? i / 10 : 0);
  add(cie, 'line', { class: 'tick', x1: -6, x2: 0, y1: y, y2: y });
  tick(cie, x);
}
markers(cie, full, [[.299, .602], [.304, .493], [.3744, .4955], [.3392, .43], [.2616, .3622], [.2241, .3292], [.2066, .271],
  [.2494, .2678], [.2675, .2561], [.2896, .2232], [.216, .194], [.1908, .1417], [.3194, .1559], [.1483, .0627], [.373, .2484],
  [.3785, .359], [.3992, .3674], [.419, .5071], [.4466, .4774], [.4732, .4424], [.5125, .4094], [.461, .3144], [.5368, .3182], [.6397, .3325]],
[[.3356, .6235, '#0f0'], [.3293, .5123, '#499449'], [.3924, .5188, '#9fbd40'], [.3523, .4424, '#596e40'], [.2733, .3609, '#65bfa9'],
  [.2381, .326, '#0ff'], [.2192, .2678, '#0086a4'], [.2508, .2626, '#5c7ca0'], [.2562, .2471, '#000'], [.263, .249, '#8281b0'],
  [.2611, .2044, '#5b3e6a'], [.2129, .1843, '#4a5ba7'], [.1871, .1313, '#313c96'], [.2968, .1442, '#f0f'], [.1492, .0537, '#00f'],
  [.3532, .2413, '#bb5494'], [.3721, .3622, '#c5957f'], [.4028, .3842, '#735244'], [.433, .5375, '#ff0'], [.456, .5071, '#ecc821'],
  [.4786, .4702, '#e6a12c'], [.5115, .4373, '#d97828'], [.636, .3512, '#f00'], [.5296, .3305, '#af323a'], [.4452, .3189, '#c25362']]);
const wx = pct(.313 / full.x1), wy = pct(1 - .3299 / full.y1);
add(cie, 'rect', { x: wx, y: wy, width: 13, height: 12, transform: 'translate(-6.5 -6)', fill: 'none', stroke: '#000', 'stroke-width': 2 });
add(cie, 'rect', { x: wx, y: wy, width: 10, height: 9, transform: 'translate(-5 -4.5)', fill: 'none', stroke: '#fff' });
add(cie, 'circle', { cx: wx, cy: wy, r: 4, fill: '#9c9c9c', stroke: '#000' });

const close = { x0: .3865, x1: .4529, y0: .4722, y1: .5387 };
markers(chromaticity(document.getElementById('inset'), close), close,
  [[.4193, .5053], [.447, .474]], [[.4334, .5335, '#ff0'], [.3925, .5162, '#9fbd40']]);
```
